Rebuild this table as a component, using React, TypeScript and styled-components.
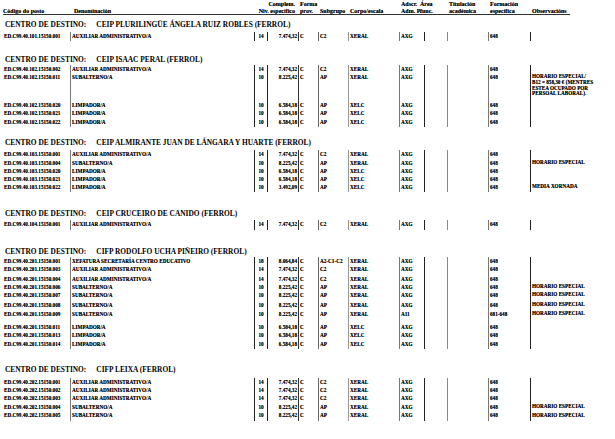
import React from 'react';
import styled, { createGlobalStyle } from 'styled-components';

const GlobalStyle = createGlobalStyle`
  html, body { margin: 0; padding: 0; background: #fff; }
  body { font-family: "Liberation Serif", "Times New Roman", serif; color: #000; }
`;

const COLS = '67px 184px 13px 31px 20px 30px 51px 25px 23px 41px 42px 85px';
const HCOLS = '69px 175px 51px 20px 30px 51px 19px 29px 41px 42px 40px';

const Page = styled.div`
  width: 612px;
  padding-left: 3px;
`;

const Header = styled.div`
  display: grid;
  grid-template-columns: ${HCOLS};
  width: 567px;
  padding-top: 1px;
  border-bottom: 1px solid #333;
  height: 13px;
`;

const HCell = styled.div<{ $align?: 'left' | 'right'; $pad?: number }>`
  display: flex;
  flex-direction: column;
  justify-content: flex-end;
  align-items: ${p => (p.$align === 'right' ? 'flex-end' : 'flex-start')};
  padding-left: ${p => (p.$pad ?? 2)}px;
  padding-right: ${p => (p.$align === 'right' ? 3 : 0)}px;
  font-size: 6px;
  line-height: 6.5px;
  font-weight: 700;
  white-space: nowrap;
  text-shadow: 0 0 0.3px rgba(0, 0, 0, 0.6);
`;

const Title = styled.div<{ $mt: number }>`
  margin-top: ${p => p.$mt}px;
  padding-left: 2px;
  height: 8px;
  font-size: 7.4px;
  line-height: 8px;
  font-weight: 700;
  white-space: nowrap;
  display: flex;
`;

const TitleLabel = styled.span`
  margin-right: 10px;
`;

const Body = styled.div<{ $gap: number }>`
  margin-top: ${p => p.$gap}px;
`;

const Row = styled.div<{ $h: number }>`
  display: grid;
  grid-template-columns: ${COLS};
  height: ${p => p.$h}px;
`;

const Cell = styled.div<{ $bar?: string; $align?: 'left' | 'center' | 'right' }>`
  border-left: ${p => (p.$bar ? `1px solid ${p.$bar}` : 'none')};
  padding-top: 2px;
  padding-left: ${p => (p.$align === 'center' ? 0 : 1)}px;
  padding-right: ${p => (p.$align === 'right' ? 1 : 0)}px;
  text-align: ${p => p.$align ?? 'left'};
  font-size: 5.2px;
  line-height: 5px;
  font-weight: 700;
  white-space: nowrap;
  min-width: 0;
  text-shadow: 0 0 0.3px rgba(0, 0, 0, 0.6);
`;

const ObsCell = styled.div<{ $bar: string }>`
  border-left: 1px solid ${p => p.$bar};
  padding-top: 1.6px;
  padding-left: 1px;
  font-size: 5.2px;
  line-height: 5.8px;
  font-weight: 700;
  white-space: nowrap;
  text-shadow: 0 0 0.3px rgba(0, 0, 0, 0.6);
`;

const BAR = {
  den: '#777',
  niv: '#222',
  comp: '#222',
  forma: '#333',
  sub: '#666',
  corpo: '#999',
  adscr: '#777',
  area: '#222',
  tit: '#888',
  form: '#777',
  obs: '#222',
};

type RowData = {
  code: string;
  den: string;
  niv: string;
  comp: string;
  sub: string;
  corpo: string;
  adscr: string;
  form: string;
  obs?: string[];
  h: number;
};

type SectionData = { name: string; mt: number; gap: number; rows: RowData[] };

const aux = (code: string, h: number): RowData => ({
  code, den: 'AUXILIAR ADMINISTRATIVO/A', niv: '14', comp: '7.474,32', sub: 'C2', corpo: 'XERAL', adscr: 'AXG', form: '648', h,
});
const sub = (code: string, h: number, obs?: string[]): RowData => ({
  code, den: 'SUBALTERNO/A', niv: '10', comp: '8.225,42', sub: 'AP', corpo: 'XERAL', adscr: 'AXG', form: '648', obs, h,
});
const lim = (code: string, h: number, comp = '6.584,18', obs?: string[]): RowData => ({
  code, den: 'LIMPADOR/A', niv: '10', comp, sub: 'AP', corpo: 'XELC', adscr: 'AXG', form: '648', obs, h,
});

const HE = ['HORARIO ESPECIAL'];

const SECTIONS: SectionData[] = [
  {
    name: 'CEIP PLURILINGÜE ÁNGELA RUIZ ROBLES (FERROL)', mt: 6, gap: 2.5,
    rows: [aux('ED.C99.40.101.15150.001', 9.5)],
  },
  {
    name: 'CEIP ISAAC PERAL (FERROL)', mt: 14.5, gap: 1.5,
    rows: [
      aux('ED.C99.40.102.15150.002', 7.5),
      sub('ED.C99.40.102.15150.011', 28, ['HORARIO ESPECIAL/', 'B12 = 858,30 € (MENTRES', 'ESTEA OCUPADO POR', 'PERSOAL LABORAL).']),
      lim('ED.C99.40.102.15150.020', 8.5),
      lim('ED.C99.40.102.15150.021', 8.5),
      lim('ED.C99.40.102.15150.022', 9.5),
    ],
  },
  {
    name: 'CEIP ALMIRANTE JUAN DE LÁNGARA Y HUARTE (FERROL)', mt: 12, gap: 2.5,
    rows: [
      aux('ED.C99.40.103.15150.001', 9),
      sub('ED.C99.40.103.15150.004', 8.5, HE),
      lim('ED.C99.40.103.15150.020', 8),
      lim('ED.C99.40.103.15150.021', 7.5),
      lim('ED.C99.40.103.15150.022', 9.5, '3.492,09', ['MEDIA XORNADA']),
    ],
  },
  {
    name: 'CEIP CRUCEIRO DE CANIDO (FERROL)', mt: 18, gap: 2,
    rows: [aux('ED.C99.40.104.15150.001', 9.5)],
  },
  {
    name: 'CIFP RODOLFO UCHA PIÑEIRO (FERROL)', mt: 18.5, gap: 1,
    rows: [
      {
        code: 'ED.C99.40.201.15150.001', den: 'XEFATURA SECRETARÍA CENTRO EDUCATIVO', niv: '18', comp: '8.064,84',
        sub: 'A2-C1-C2', corpo: 'XERAL', adscr: 'AXG', form: '648', h: 8,
      },
      aux('ED.C99.40.201.15150.003', 9.5),
      aux('ED.C99.40.201.15150.004', 8),
      sub('ED.C99.40.201.15150.006', 8, HE),
      sub('ED.C99.40.201.15150.007', 10, HE),
      sub('ED.C99.40.201.15150.008', 9, HE),
      { ...sub('ED.C99.40.201.15150.009', 13, HE), adscr: 'A11', form: '681-648' },
      lim('ED.C99.40.201.15150.011', 8.5),
      lim('ED.C99.40.201.15150.013', 8.5),
      lim('ED.C99.40.201.15150.014', 9.5),
    ],
  },
  {
    name: 'CIFP LEIXA (FERROL)', mt: 17, gap: 3.5,
    rows: [
      aux('ED.C99.40.202.15150.001', 8),
      aux('ED.C99.40.202.15150.002', 8),
      aux('ED.C99.40.202.15150.003', 9),
      sub('ED.C99.40.202.15150.004', 8.5, HE),
      sub('ED.C99.40.202.15150.005', 9.5, HE),
    ],
  },
];

const TableRow: React.FC<{ r: RowData }> = ({ r }) => (
  <Row $h={r.h}>
    <Cell>{r.code}</Cell>
    <Cell $bar={BAR.den}>{r.den}</Cell>
    <Cell $bar={BAR.niv} $align="center">{r.niv}</Cell>
    <Cell $bar={BAR.comp} $align="right">{r.comp}</Cell>
    <Cell $bar={BAR.forma}>C</Cell>
    <Cell $bar={BAR.sub}>{r.sub}</Cell>
    <Cell $bar={BAR.corpo}>{r.corpo}</Cell>
    <Cell $bar={BAR.adscr}>{r.adscr}</Cell>
    <Cell $bar={BAR.area} />
    <Cell $bar={BAR.tit} />
    <Cell $bar={BAR.form}>{r.form}</Cell>
    <ObsCell $bar={BAR.obs}>
      {r.obs?.map((l, i) => <div key={i}>{l}</div>)}
    </ObsCell>
  </Row>
);

export default function App() {
  return (
    <Page>
      <GlobalStyle />
      <Header>
        <HCell $pad={0}>Código do posto</HCell>
        <HCell>Denominación</HCell>
        <HCell $align="right">
          <span>Complem.</span>
          <span>Niv. específico</span>
        </HCell>
        <HCell>
          <span>Forma</span>
          <span>prov.</span>
        </HCell>
        <HCell>Subgrupo</HCell>
        <HCell>Corpo/escala</HCell>
        <HCell>
          <span>Adscr.</span>
          <span>Adm. P.</span>
        </HCell>
        <HCell>
          <span>Área</span>
          <span>func.</span>
        </HCell>
        <HCell>
          <span>Titulación</span>
          <span>académica</span>
        </HCell>
        <HCell>
          <span>Formación</span>
          <span>específica</span>
        </HCell>
        <HCell>Observacións</HCell>
      </Header>
      {SECTIONS.map((s, i) => (
        <React.Fragment key={i}>
          <Title $mt={s.mt}>
            <TitleLabel>CENTRO DE DESTINO:</TitleLabel>
            <span>{s.name}</span>
          </Title>
          <Body $gap={s.gap}>
            {s.rows.map((r, j) => (
              <TableRow key={j} r={r} />
            ))}
          </Body>
        </React.Fragment>
      ))}
    </Page>
  );
}
